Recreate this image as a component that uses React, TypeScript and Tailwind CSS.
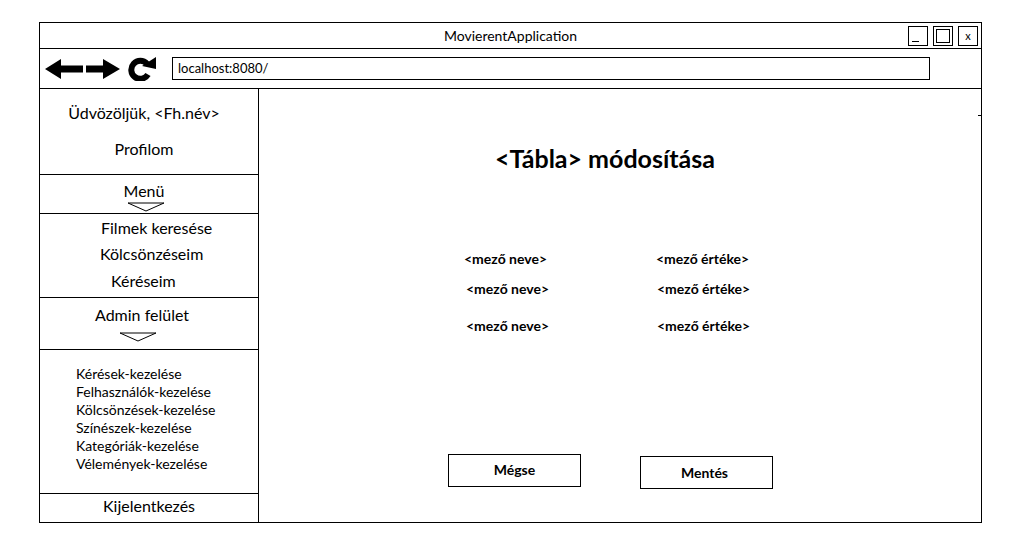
const adminItems = [
  'Kérések-kezelése',
  'Felhasználók-kezelése',
  'Kölcsönzések-kezelése',
  'Színészek-kezelése',
  'Kategóriák-kezelése',
  'Vélemények-kezelése',
];

const fields = [
  { name: 'pl-[205px]', value: 'pl-[0px]', row: 'mt-[0px]' },
  { name: 'pl-[207px]', value: 'pl-[1px]', row: 'mt-[14px]' },
  { name: 'pl-[207px]', value: 'pl-[1px]', row: 'mt-[21px]' },
];

function Chevron({ className }: { className?: string }) {
  return (
    <svg width={38} height={10} viewBox="0 0 38 10" className={className}>
      <polyline points="1,1 19,9 37,1 1,1" fill="white" stroke="black" strokeWidth={1} />
    </svg>
  );
}

function NavIcons() {
  return (
    <div className="flex items-center">
      <svg width={38} height={20} viewBox="0 0 38 20" className="ml-[5px]">
        <polygon points="0,10 16,0 16,6.5 38,6.5 38,13.5 16,13.5 16,20" fill="black" />
      </svg>
      <svg width={34} height={20} viewBox="0 0 34 20" className="ml-[3px]">
        <polygon points="34,10 17,0 17,6.5 0,6.5 0,13.5 17,13.5 17,20" fill="black" />
      </svg>
      <svg width={29} height={24} viewBox="0 0 29 24" className="ml-[8px]">
        <path d="M19 6.8 A9 9 0 1 0 20 17.5" fill="none" stroke="black" strokeWidth={6} />
        <polygon points="14,9 28,0 28,12" fill="black" />
      </svg>
    </div>
  );
}

export default function App() {
  return (
    <div className="w-[1026px] h-[547px] bg-white text-black relative" style={{ fontFamily: 'Lato, "Open Sans", sans-serif' }}>
      <div className="absolute left-[39px] top-[22px] w-[943px] h-[501px] border border-black flex flex-col">
        {/* title bar */}
        <div className="h-[26px] border-b border-black relative flex items-center justify-center">
          <span className="text-[14px] leading-none">MovierentApplication</span>
          <div className="absolute right-[3px] top-[3px] flex gap-[5px]">
            <div className="w-[20px] h-[20px] border border-black relative">
              <div className="absolute left-[3px] bottom-[3px] w-[7px] h-[1px] bg-black" />
            </div>
            <div className="w-[20px] h-[20px] border border-black flex items-center justify-center">
              <div className="w-[14px] h-[14px] border border-black" />
            </div>
            <div className="w-[20px] h-[20px] border border-black flex items-center justify-center text-[11px] leading-none pb-[2px]">x</div>
          </div>
        </div>
        {/* address row */}
        <div className="h-[40px] border-b border-black flex items-center">
          <NavIcons />
          <div className="ml-[15px] w-[758px] h-[23px] border border-black flex items-center pl-[5px] text-[13px]">
            localhost:8080/
          </div>
        </div>
        {/* body */}
        <div className="flex-1 flex">
          <aside className="w-[219px] border-r border-black flex flex-col text-[16px] leading-[20px]">
            <div className="h-[86px] border-b border-black flex flex-col items-center pt-[14px] pr-[10px]">
              <div>Üdvözöljük, &lt;Fh.név&gt;</div>
              <div className="mt-[16px]">Profilom</div>
            </div>
            <div className="h-[39px] border-b border-black flex flex-col items-center pt-[6px] pr-[10px]">
              <div>Menü</div>
              <Chevron className="mt-[1px] ml-[3px]" />
            </div>
            <div className="h-[84px] border-b border-black flex flex-col pt-[4px]">
              <div className="pl-[61px]">Filmek keresése</div>
              <div className="pl-[60px] mt-[6px]">Kölcsönzéseim</div>
              <div className="pl-[71px] mt-[7px]">Kéréseim</div>
            </div>
            <div className="h-[52px] border-b border-black flex flex-col pt-[7px]">
              <div className="pl-[55px]">Admin felület</div>
              <Chevron className="ml-[79px] mt-[7px]" />
            </div>
            <div className="h-[144px] border-b border-black pt-[15px] pl-[36px] text-[14px] leading-[18px]">
              {adminItems.map((item) => (
                <div key={item}>{item}</div>
              ))}
            </div>
            <div className="flex-1 flex items-center justify-center pb-[4px]">Kijelentkezés</div>
          </aside>
          <main className="flex-1 relative flex flex-col">
            <div className="absolute right-0 top-[26px] w-[3px] h-[1px] bg-black" />
            <h1 className="mt-[54px] text-[25px] leading-[30px] font-bold text-center pr-[30px]">&lt;Tábla&gt; módosítása</h1>
            <div className="mt-[78px] flex flex-col text-[14px] leading-[16px] font-bold">
              {fields.map((f, i) => (
                <div key={i} className={`flex ${f.row}`}>
                  <div className={`${f.name} w-[397px] shrink-0`}>&lt;mező neve&gt;</div>
                  <div className={f.value}>&lt;mező értéke&gt;</div>
                </div>
              ))}
            </div>
            <div className="mt-[120px] flex items-start pl-[189px] text-[14px] font-bold">
              <div className="w-[133px] h-[33px] border border-black flex items-center justify-center pb-[2px]">Mégse</div>
              <div className="ml-[59px] mt-[2px] w-[133px] h-[33px] border border-black flex items-center justify-center pr-[4px]">Mentés</div>
            </div>
          </main>
        </div>
      </div>
    </div>
  );
}
